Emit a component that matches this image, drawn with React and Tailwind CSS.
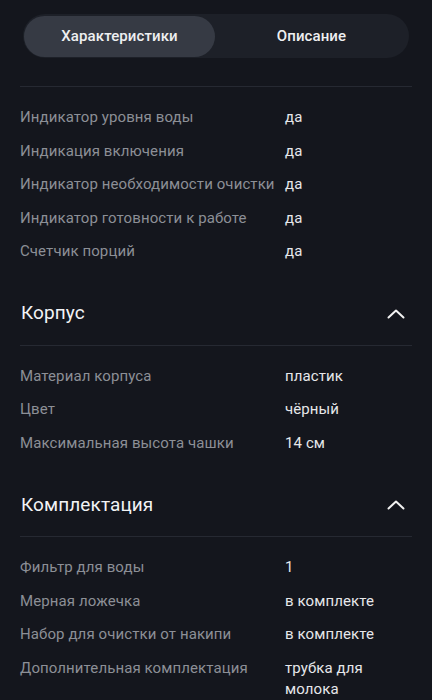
import React from 'react';

const sections = [
    {
        title: null,
        rows: [
            ['Индикатор уровня воды', 'да'],
            ['Индикация включения', 'да'],
            ['Индикатор необходимости очистки', 'да'],
            ['Индикатор готовности к работе', 'да'],
            ['Счетчик порций', 'да'],
        ],
    },
    {
        title: 'Корпус',
        rows: [
            ['Материал корпуса', 'пластик'],
            ['Цвет', 'чёрный'],
            ['Максимальная высота чашки', '14 см'],
        ],
    },
    {
        title: 'Комплектация',
        rows: [
            ['Фильтр для воды', '1'],
            ['Мерная ложечка', 'в комплекте'],
            ['Набор для очистки от накипи', 'в комплекте'],
            ['Дополнительная комплектация', 'трубка для молока'],
        ],
    },
];

const ChevronUp = () => (
    <svg width="18" height="10" viewBox="0 0 18 10" fill="none">
        <path d="M1.5 8.5 L9 1.5 L16.5 8.5" stroke="#f2f2f2" strokeWidth="2" strokeLinecap="round" strokeLinejoin="round" />
    </svg>
);

const Rows = ({ rows }) => (
    <div className="pt-[14px]">
        {rows.map(([label, value]) => (
            <div key={label} className="grid grid-cols-[265px_1fr] py-[6.25px] text-[15px] leading-[21px]">
                <span className="text-[#8c8f96]">{label}</span>
                <span className="text-[#e6e7ea] pr-6">{value}</span>
            </div>
        ))}
    </div>
);

export default function App() {
    return (
        <div className="min-h-[700px] bg-[#14161d] px-[20px] pt-[14px] font-['Roboto','Noto_Sans',sans-serif] tracking-[0.1px]">
            <div className="mx-[3px] flex h-[44px] items-center rounded-full bg-[#1d2028] p-[1px]">
                <button className="flex h-[41px] w-[191px] items-center justify-center rounded-full bg-[#363a44] text-[15px] font-medium text-[#eeeff1]">
                    Характеристики
                </button>
                <button className="flex h-[41px] flex-1 items-center justify-center text-[15px] font-medium text-[#eeeff1]">
                    Описание
                </button>
            </div>
            <div className="mt-[28px] h-px bg-[#262932]" />

            {sections.map((s, i) => (
                <div key={i}>
                    {s.title && (
                        <>
                            <div className="mt-[30px] flex h-[30px] items-center justify-between pl-[1px] pr-[7px]">
                                <h3 className="text-[19px] text-[#f2f3f5]">{s.title}</h3>
                                <ChevronUp />
                            </div>
                            <div className="mt-[16px] h-px bg-[#262932]" />
                        </>
                    )}
                    <Rows rows={s.rows} />
                </div>
            ))}
        </div>
    );
}
